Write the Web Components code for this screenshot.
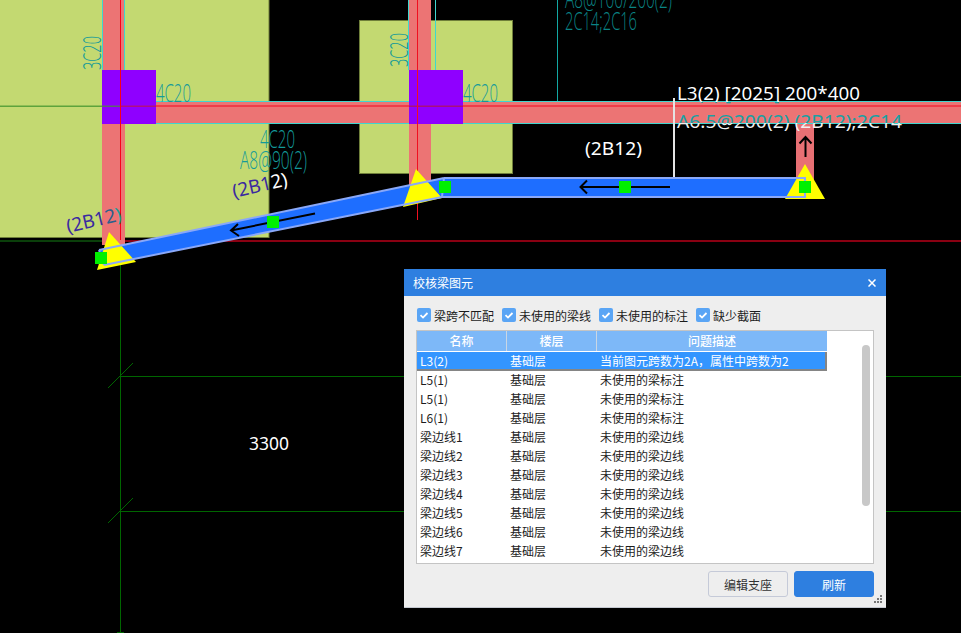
<!DOCTYPE html>
<html>
<head>
<meta charset="utf-8">
<title>校核梁图元</title>
<style>
    html, body{ margin: 0; padding: 0; background: #000; overflow: hidden; }
    body{ font-family: "Noto Sans", "Noto Sans CJK SC", sans-serif; }
</style>
</head>
<body>

<template id="tmpl-drawing">
    <style>
        :host{ display: block; position: relative; width: 961px; height: 633px; background: #000; overflow: hidden; }
        svg{ display: block; }
        text{ font-family: "Noto Sans", "Noto Sans CJK SC", sans-serif; }
        .cad{ font-family: "Open Sans", sans-serif; font-weight: 300; font-size: 26px; fill: #139a9a; }
        .cad-dark{ fill: #0a8486; }
        .mark{ font-size: 18px; fill: #fff; }
    </style>
    <svg width="961" height="633" viewBox="0 0 961 633">
        <defs>
            <linearGradient id="over-beam" gradientUnits="userSpaceOnUse" x1="0" y1="85" x2="0" y2="135">
                <stop offset="0.77" stop-color="#1ba0a4"/>
                <stop offset="0.77" stop-color="#f0f0f0"/>
            </linearGradient>
            <linearGradient id="under-beam" gradientUnits="userSpaceOnUse" x1="0" y1="85" x2="0" y2="105">
                <stop offset="0.84" stop-color="#ffffff"/>
                <stop offset="0.84" stop-color="#1ba0a4"/>
            </linearGradient>
        </defs>

        <!-- pads -->
        <rect x="-2" y="-2" width="271" height="239.5" fill="#c3d971" stroke="#6f7f3a"/>
        <rect x="359.5" y="20.5" width="153" height="153" fill="#c3d971" stroke="#6f7f3a"/>

        <!-- axis lines under the beams -->
        <rect x="0" y="240" width="102" height="2" fill="#0a3f0a"/>
        <rect x="120" y="240" width="841" height="2" fill="#8a0012"/>
        <path d="M120.5 240V633M120 376.5H961M120 511.5H961M108 388L133 363M108 523L133 498M117 632.5H124" stroke="#006600" fill="none"/>
        <path d="M417.5 0V220" stroke="#f01020"/>

        <!-- pink beams -->
        <rect x="102" y="0" width="23" height="245" fill="#ec7474"/>
        <rect x="409" y="0" width="22" height="185" fill="#ec7474"/>
        <rect x="156" y="102" width="805" height="22" fill="#ec7474"/>
        <rect x="796" y="124" width="18" height="64" fill="#e87074"/>
        <path d="M156 101.5H409M463 101.5H961M156 123.5H409M463 123.5H961M102.5 0V70M124.5 0V70M408.5 0V70M435.5 0V70" stroke="#3fd6d0" fill="none"/>
        <path d="M557.5 0V101" stroke="#12a8a4" fill="none"/>

        <!-- columns -->
        <rect x="102" y="70" width="54" height="54" fill="#8f00ff"/>
        <rect x="409" y="70" width="54" height="54" fill="#8f00ff"/>

        <!-- axis lines over the beams -->
        <rect x="0" y="105.5" width="102" height="1.5" fill="#5ea33c"/>
        <rect x="102" y="105.5" width="18" height="1.5" fill="#5c6a6a"/>
        <rect x="120" y="105.5" width="36" height="1.5" fill="#b01080"/>
        <rect x="156" y="105" width="253" height="2" fill="#f03c48"/>
        <rect x="409" y="105.5" width="54" height="1.5" fill="#a8107c"/>
        <rect x="463" y="105" width="498" height="2" fill="#f03c48"/>
        <path d="M120.5 0V240" stroke="#f80018"/>
        <path d="M417.5 0V220" stroke="#f01020"/>

        <!-- cad rebar texts -->
        <text class="cad" transform="translate(101,70) rotate(-90)" textLength="34" lengthAdjust="spacingAndGlyphs">3C20</text>
        <text class="cad" transform="translate(408,67) rotate(-90)" textLength="34" lengthAdjust="spacingAndGlyphs">3C20</text>
        <text class="cad" x="156" y="102" textLength="35" lengthAdjust="spacingAndGlyphs">4C20</text>
        <text class="cad" x="463" y="102" textLength="35" lengthAdjust="spacingAndGlyphs">4C20</text>
        <text class="cad" x="260" y="148" textLength="35" lengthAdjust="spacingAndGlyphs">4C20</text>
        <text class="cad" x="240" y="169" textLength="67" lengthAdjust="spacingAndGlyphs">A8@90(2)</text>
        <text class="cad cad-dark" x="565" y="8" textLength="107" lengthAdjust="spacingAndGlyphs">A8@100/200(2)</text>
        <text class="cad cad-dark" x="565" y="30" textLength="72" lengthAdjust="spacingAndGlyphs">2C14;2C16</text>

        <!-- white stem for the beam label -->
        <rect x="673" y="98" width="2" height="80" fill="#e4e4e4"/>

        <!-- blue beams: fill, supports, then outline -->
        <polygon points="99,250 444,178 444,197 104,265" fill="#1e6eff"/>
        <rect x="444" y="178" width="361" height="19" fill="#1e6eff"/>
        <polygon points="109,232 97,270 136,262" fill="#ffff00"/>
        <polygon points="416,169 403,207 442,198" fill="#ffff00"/>
        <polygon points="805,164 785,199 825,199" fill="#ffff00"/>
        <path d="M99 250L444 178M104 265L442 197M99 250L104 265M444 178H805V197H442L444 178" fill="none" stroke="#8aa8f8" stroke-width="2"/>

        <!-- direction arrows -->
        <g fill="none" stroke="#000" stroke-width="2">
            <path d="M581 187H670M587 180.5L580.5 187L587 193.5"/>
            <path d="M315 213.5L231 230.5M238 224L231 230.5L239 236"/>
            <path d="M805.5 157V137M799.5 143.5L805.5 137L811.5 143.5"/>
        </g>

        <!-- grips -->
        <g fill="#00f000">
            <rect x="95" y="252" width="12" height="12"/>
            <rect x="267" y="216" width="12" height="12"/>
            <rect x="439" y="181" width="12" height="12"/>
            <rect x="619" y="181" width="12" height="12"/>
            <rect x="799" y="181" width="12" height="12"/>
        </g>

        <!-- beam labels -->
        <text transform="translate(68,233) rotate(-13)" font-size="19" textLength="56" lengthAdjust="spacingAndGlyphs" fill="#3b2aa0">(2B1<tspan fill="#2b5f8c">2</tspan><tspan fill="#1c9c98">)</tspan></text>
        <text transform="translate(234,198) rotate(-13)" font-size="19" textLength="56" lengthAdjust="spacingAndGlyphs" fill="#3b2aa0">(2B1<tspan fill="#fff">2)</tspan></text>
        <text class="mark" x="585" y="155" font-size="19" textLength="57" lengthAdjust="spacingAndGlyphs">(2B12)</text>
        <text class="mark" x="677" y="100" textLength="183" lengthAdjust="spacingAndGlyphs" style="fill:url(#under-beam)">L3(2) [2025] 200*400</text>
        <text class="mark" x="677" y="128" textLength="225" lengthAdjust="spacingAndGlyphs" style="fill:url(#over-beam)">A6.5@200(2) (2B12);2C14</text>
        <text class="mark" x="249" y="450" textLength="40" lengthAdjust="spacingAndGlyphs">3300</text>
    </svg>
    <slot></slot>
</template>

<template id="tmpl-dialog">
    <style>
        :host{
            position: absolute; left: 404px; top: 269px; width: 482px; height: 339px;
            display: flex; flex-direction: column; box-sizing: border-box;
            background: #eeeeee; color: #1c1c1c; border-bottom: 1px solid #c4c8d0;
            font: 12px/19px "Noto Sans CJK SC", "Noto Sans", sans-serif;
        }
        .title{
            flex: none; height: 27px; padding: 0 9px; background: #2e7fe0; color: #fff;
            display: flex; align-items: center; justify-content: space-between;
            font-size: 12px;
        }
        .close{ width: 8px; height: 8px; margin-right: 1px; display: block; }
        .filters{ flex: none; height: 34px; padding: 4px 13px 0; box-sizing: border-box; display: flex; align-items: center; gap: 8px; line-height: 17px; }
        .main{ flex: 1; margin: 0 12px; min-height: 0; }
        .actions{ flex: none; height: 43px; padding: 7px 12px 0; box-sizing: border-box; display: flex; justify-content: flex-end; gap: 6px; }
        .grip{ position: absolute; right: 3px; bottom: 3px; width: 9px; height: 9px; display: block; }
    </style>
    <div class="title">
        <span><slot name="title"></slot></span>
        <svg class="close" viewBox="0 0 8 8"><path d="M.5 .5L7.5 7.5M7.5 .5L.5 7.5" stroke="#fff" stroke-width="1.5"/></svg>
    </div>
    <div class="filters"><slot name="filter"></slot></div>
    <div class="main"><slot name="table"></slot></div>
    <div class="actions"><slot name="action"></slot></div>
    <svg class="grip" viewBox="0 0 9 9" fill="#777">
        <rect x="6" y="0" width="2" height="2"/><rect x="3" y="3" width="2" height="2"/><rect x="6" y="3" width="2" height="2"/>
        <rect x="0" y="6" width="2" height="2"/><rect x="3" y="6" width="2" height="2"/><rect x="6" y="6" width="2" height="2"/>
    </svg>
</template>

<template id="tmpl-check">
    <style>
        :host{ display: inline-flex; align-items: center; gap: 3px; white-space: nowrap; }
        .box{ width: 14px; height: 14px; border-radius: 2px; background: #5aa5f5; display: block; }
    </style>
    <svg class="box" viewBox="0 0 14 14"><path d="M3.5 7.2L6 9.6L10.5 5" fill="none" stroke="#fff" stroke-width="1.8"/></svg>
    <slot></slot>
</template>

<template id="tmpl-table">
    <style>
        :host{ display: block; position: relative; box-sizing: border-box; height: 100%; background: #fff; border: 1px solid #c4c4c4; overflow: hidden; }
        .head{ width: 410px; height: 20px; margin-bottom: 1px; display: grid; grid-template-columns: 89px 90px 231px; background: #7db8f8; color: #fff; font-weight: 500; text-align: center; line-height: 20px; }
        .thumb{ position: absolute; left: 445px; top: 14px; width: 8px; height: 161px; background: #c8c8c8; border-radius: 4px; }
    </style>
    <div class="head"><slot name="head"></slot></div>
    <slot></slot>
    <div class="thumb"></div>
</template>

<template id="tmpl-cell">
    <style>
        :host{ display: block; border-left: 1px solid #c9d6e4; }
        :host(:first-child){ border-left: 0; }
    </style>
    <slot></slot>
</template>

<template id="tmpl-row">
    <style>
        :host{ display: grid; grid-template-columns: 90px 90px 230px; width: 410px; height: 19px; line-height: 17px; box-sizing: border-box; }
        :host([selected]){ background: #3395ff; color: #fff; box-shadow: inset -2px -2px 0 #858585; }
        span{ padding-left: 3px; white-space: nowrap; overflow: hidden; }
    </style>
    <span class="name"></span><span class="floor"></span><span class="desc"></span>
</template>

<template id="tmpl-button">
    <style>
        :host{ display: flex; align-items: center; justify-content: center; box-sizing: border-box; width: 80px; height: 26px; border: 1px solid #c5cad8; border-radius: 3px; background: #eeeeee; color: #333; }
        :host([primary]){ background: #2e7fe0; border-color: #2e7fe0; color: #fff; }
    </style>
    <slot></slot>
</template>

<script>
    function define(name, id, init){
        customElements.define(name, class extends HTMLElement{
            connectedCallback(){
                if(this.shadowRoot) return;
                this.attachShadow({ mode: 'open' });
                this.shadowRoot.append(document.getElementById(id).content.cloneNode(true));
                if(init) init(this);
            }
        });
    }

    define('cad-drawing', 'tmpl-drawing');
    define('check-dialog', 'tmpl-dialog');
    define('filter-check', 'tmpl-check');
    define('result-table', 'tmpl-table');
    define('head-cell', 'tmpl-cell');
    define('dialog-button', 'tmpl-button');
    define('result-row', 'tmpl-row', el => {
        for(const key of ['name', 'floor', 'desc']){
            el.shadowRoot.querySelector('.' + key).textContent = el.getAttribute(key);
        }
    });
</script>

<cad-drawing>
    <check-dialog>
        <span slot="title">校核梁图元</span>

        <filter-check slot="filter">梁跨不匹配</filter-check>
        <filter-check slot="filter">未使用的梁线</filter-check>
        <filter-check slot="filter">未使用的标注</filter-check>
        <filter-check slot="filter">缺少截面</filter-check>

        <result-table slot="table">
            <head-cell slot="head">名称</head-cell>
            <head-cell slot="head">楼层</head-cell>
            <head-cell slot="head">问题描述</head-cell>
            <result-row selected name="L3(2)" floor="基础层" desc="当前图元跨数为2A，属性中跨数为2"></result-row>
            <result-row name="L5(1)" floor="基础层" desc="未使用的梁标注"></result-row>
            <result-row name="L5(1)" floor="基础层" desc="未使用的梁标注"></result-row>
            <result-row name="L6(1)" floor="基础层" desc="未使用的梁标注"></result-row>
            <result-row name="梁边线1" floor="基础层" desc="未使用的梁边线"></result-row>
            <result-row name="梁边线2" floor="基础层" desc="未使用的梁边线"></result-row>
            <result-row name="梁边线3" floor="基础层" desc="未使用的梁边线"></result-row>
            <result-row name="梁边线4" floor="基础层" desc="未使用的梁边线"></result-row>
            <result-row name="梁边线5" floor="基础层" desc="未使用的梁边线"></result-row>
            <result-row name="梁边线6" floor="基础层" desc="未使用的梁边线"></result-row>
            <result-row name="梁边线7" floor="基础层" desc="未使用的梁边线"></result-row>
        </result-table>

        <dialog-button slot="action">编辑支座</dialog-button>
        <dialog-button slot="action" primary>刷新</dialog-button>
    </check-dialog>
</cad-drawing>

</body>
</html>
